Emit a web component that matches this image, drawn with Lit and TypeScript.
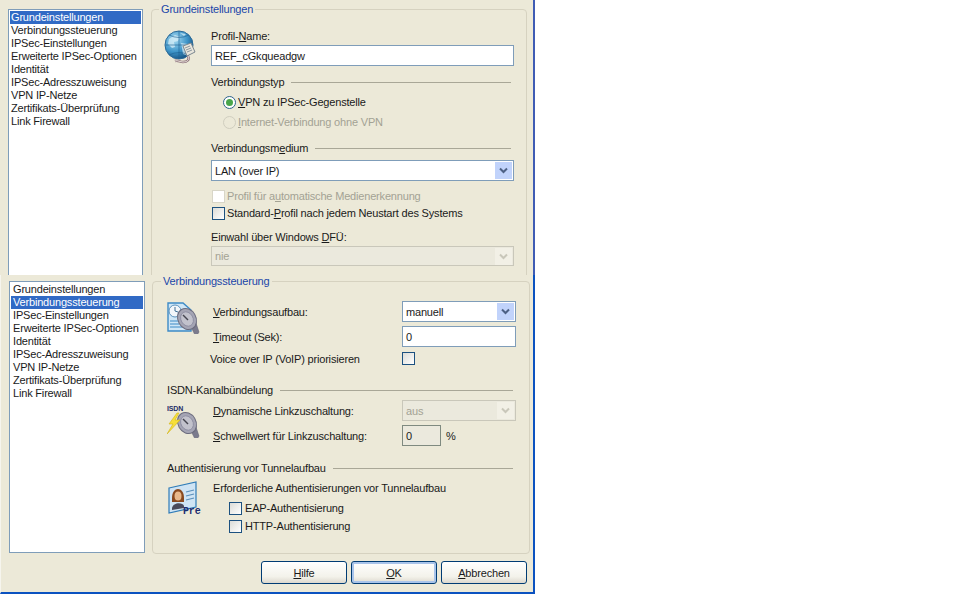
import { LitElement, html, css, svg } from "lit";
import { customElement } from "lit/decorators.js";

const items = ["Grundeinstellungen","Verbindungssteuerung","IPSec-Einstellungen","Erweiterte IPSec-Optionen","Identität","IPSec-Adresszuweisung","VPN IP-Netze","Zertifikats-Überprüfung","Link Firewall"];

const chevron = svg`<svg class="chev" width="9" height="7" viewBox="0 0 9 7"><path d="M1 1.5 L4.5 5 L8 1.5" fill="none" stroke="currentColor" stroke-width="2"/></svg>`;

const globe = html`<svg class="ico" width="34" height="36" viewBox="0 0 34 36">
  <defs><radialGradient id="g1" cx="35%" cy="30%" r="75%"><stop offset="0" stop-color="#a9dcf2"/><stop offset=".6" stop-color="#3d94c8"/><stop offset="1" stop-color="#15507f"/></radialGradient></defs>
  <circle cx="15" cy="15" r="14" fill="url(#g1)" stroke="#2c6a98" stroke-width="1"/>
  <path d="M5 9l6-4 5 2-2 4-4 1 1 5-3 1-4-4zM17 13l7 1 2 5-4 6-3-1-1-6zM16 3l6 1-2 2z" fill="#d7eef7" opacity=".75"/>
  <path d="M2 15h26M15 1v28M5 5q10 5 20 0M5 25q10-5 20 0" fill="none" stroke="#1d5f90" stroke-width=".6"/>
  <path d="M19 16l8-3 4 9-8 4z" fill="#e9e6dc" stroke="#7b8790"/>
  <path d="M21 18l5-2M22 20l5-2M23 22l5-2" stroke="#8c98a0" fill="none"/>
  <path d="M24 26c2 4-1 6-5 6-3 0-5-2-8-1" fill="none" stroke="#8a6f78" stroke-width="2.4"/>
  <path d="M24 26c2 4-1 6-5 6-3 0-5-2-8-1" fill="none" stroke="#ece6e0" stroke-width="1"/>
</svg>`;

const horn = svg`
  <path d="M24 25l5-4 3 9c-1 2-2 3-4 3z" fill="#7b7b8d" stroke="#5f5f70" stroke-width=".5"/>
  <ellipse cx="20" cy="17" rx="9" ry="11" transform="rotate(-30 20 17)" fill="#a5a5b4" stroke="#6c6c7e"/>
  <ellipse cx="20" cy="17" rx="6" ry="7.5" transform="rotate(-30 20 17)" fill="#c2c2cc" stroke="#85859a" stroke-width=".7"/>
  <path d="M16 13l5 5" stroke="#45454f" stroke-width="1.4"/>`;

const clockIcon = html`<svg class="ico" width="33" height="33" viewBox="0 0 33 33">
  <path d="M1 2h15l8 7v21H1z" fill="#cfe6f6" stroke="#3d8ac6" stroke-width="1.4"/>
  <circle cx="8" cy="10" r="6" fill="#f2f6fa" stroke="#5b92bd"/>
  <path d="M8 6v4l3 1" stroke="#3e6f95" fill="none"/>
  <path d="M3 20h9M3 23h9M3 26h13" stroke="#3d8ac6"/>
  <g transform="translate(0 1)">${horn}</g>
</svg>`;

const isdnIcon = html`<svg class="ico isdnico" width="33" height="33" viewBox="0 0 33 33">
  <text x="0" y="6" class="isdn">ISDN</text>
  <g transform="translate(0 1)">${horn}</g>
  <path d="M10 8L2 19h4L0 29l13-14H8l4-7z" fill="#f6e03a" stroke="#d3b414" stroke-width=".6"/>
</svg>`;

const preIcon = html`<svg class="ico" width="33" height="34" viewBox="0 0 33 34">
  <path d="M1 7l27-6v25L1 32z" fill="#cfe4f4" stroke="#2f7cb8" stroke-width="1.2"/>
  <path d="M4 17c0-6 3-9 6-9s6 3 6 9v4H4z" fill="#8a4a1f"/>
  <ellipse cx="10" cy="15" rx="3.5" ry="4.5" fill="#e9b98c"/>
  <path d="M4 27c1-6 11-6 12-2v2l-12 2z" fill="#4a4a5a"/>
  <path d="M18 11l8-2M18 15l8-2M18 19l8-2" stroke="#5a8fba" stroke-width="1.2"/>
  <text x="15" y="32.5" class="pre">Pre</text>
</svg>`;

@customElement("app-root")
export class AppRoot extends LitElement {
  static styles = css`
    :host { display:block; width:953px; height:611px; background:#fff; font:11px/14px "Liberation Sans",Arial,sans-serif; letter-spacing:-0.18px; color:#1a1a1a; overflow:hidden; }
    * { box-sizing:border-box; }
    u { text-decoration:underline; }
    .win { width:535px; background:#ece9d8; border-right:2px solid #3f5cb4; overflow:hidden; }
    .top { height:275px; display:flex; align-items:flex-start; padding:9px 0 0 8px; }
    .bot { height:319px; border-right-color:#0b52c0; border-bottom:2px solid #0b52c0; border-left:1px solid #f6f5ee; padding:6px 0 0 8px; }
    .split { display:flex; align-items:flex-start; }
    .list { background:#fff; border:1px solid #7f9db9; padding:1px; flex:none; }
    .top .list { width:135px; height:290px; margin-right:8px; }
    .bot .list { width:136px; height:272px; margin-right:7px; }
    .li { height:13px; line-height:13px; padding-left:1px; white-space:nowrap; }
    .bot .li { padding-left:2px; }
    .li.sel { background:#316ac5; color:#fff; }
    fieldset { margin:0; padding:0; border:1px solid #d6d2c0; border-radius:4px; flex:none; min-width:0; }
    legend { color:#1a45a8; padding:0 2px; line-height:14px; height:14px; white-space:nowrap; }
    .top fieldset { width:376px; height:330px; margin-top:-7px; }
    .bot fieldset { width:378px; height:280px; margin-top:-7px; }
    .row { display:flex; align-items:center; white-space:nowrap; }
    .ico { flex:none; display:block; }
    .isdn { font:bold 7px "Liberation Sans",sans-serif; fill:#1d2b66; }
    .pre { font:bold 10px "Liberation Mono",monospace; fill:#1c2d70; }
    .field { background:#fff; border:1px solid #7f9db9; display:flex; align-items:center; padding-left:3px; overflow:hidden; height:21px; }
    .drop { flex:none; width:17px; height:17px; margin:1px 1px 1px auto; background:#c1d3fb; color:#4d6185; display:flex; align-items:center; justify-content:center; }
    .field.dis { background:#ebe9dd; border-color:#c9c7ba; color:#a3a294; }
    .field.dis .drop { background:#f2f0e6; color:#c9c7ba; }
    .field.num { background:#ebe9dd; border-color:#7f8a80; }
    .cb { flex:none; width:13px; height:13px; border:1px solid #1c5180; background:linear-gradient(135deg,#dcdcd7,#fff); }
    .cb.dis { border-color:#d8d6c8; background:#fff; }
    .rad { flex:none; width:13px; height:13px; border-radius:50%; border:1px solid #2c628b; background:#fff; display:flex; align-items:center; justify-content:center; }
    .rad i { width:7px; height:7px; border-radius:50%; background:#49a54b; }
    .rad.dis { border-color:#d0cebf; background:transparent; }
    .dim { color:#a3a294; }
    .sec { flex:1; height:1px; background:#a9a797; margin-left:7px; }

    /* upper page */
    .g1 { padding:14px 0 0 12px; }
    .g1 legend { margin-left:-5px; }
    .g1 .head { display:flex; align-items:flex-start; }
    .g1 .col { margin-left:13px; width:304px; margin-top:-1px; }
    .g1 .lab { height:14px; }
    .g1 .in { margin-top:2px; width:303px; }
    .g1 .rest { margin-left:47px; width:303px; }
    .g1 .secline { width:300px; margin-top:9px; }
    .g1 .r1 { margin:6px 0 0 12px; gap:2px; }
    .g1 .r2 { margin:6px 0 0 12px; gap:2px; }
    .g1 .m1 { margin-top:12px; }
    .g1 .sel1 { margin-top:5px; width:303px; }
    .g1 .c1 { margin:8px 0 0 1px; gap:2px; }
    .g1 .c2 { margin:3px 0 0 1px; gap:2px; }
    .g1 .l2 { margin-top:10px; }
    .g1 .sel2 { margin-top:2px; width:303px; height:20px; }

    /* lower page */
    .g2 { padding:13px 0 0 14px; }
    .g2 legend { margin-left:-6px; }
    .g2 .a { display:grid; grid-template-columns:46px 189px 114px; grid-template-rows:21px 21px 15px; row-gap:4px; align-items:center; }
    .g2 .b { display:grid; grid-template-columns:46px 189px 114px; grid-template-rows:21px 21px; row-gap:4px; align-items:center; margin-top:3px; }
    .g2 .ico { grid-row:1 / span 2; align-self:start; }
    .g2 .isdnico { margin-top:5px; }
    .g2 .voice { grid-column:2; margin-left:-3px; }
    .g2 .h { margin-top:17px; width:346px; }
    .g2 .h2 { margin-top:15px; width:346px; }
    .g2 .n { width:39px; }
    .pct { display:flex; align-items:center; gap:5px; }
    .g2 .auth { display:grid; grid-template-columns:46px 1fr; margin-top:6px; }
    .g2 .auth .ico { margin-left:1px; }
    .g2 .auth .c { margin:6px 0 0 16px; gap:3px; }
    .g2 .auth .c + .c { margin-top:4px; }
    .foot { display:flex; justify-content:flex-end; gap:4px; width:518px; margin-top:7px; }
    .btn { width:86px; height:23px; border:1px solid #003c74; border-radius:3px; background:linear-gradient(#fff,#f3f2ea 70%,#dcd8ce); display:flex; align-items:center; justify-content:center; }
    .btn.def { box-shadow:inset 0 0 0 2px #a9c4ea; }
  `;

  private list(sel: number) {
    return html`<div class="list">${items.map((t, i) => html`<div class="li ${i === sel ? "sel" : ""}">${t}</div>`)}</div>`;
  }

  render() {
    return html`
      <div class="win top">
        ${this.list(0)}
        <fieldset class="g1">
          <legend>Grundeinstellungen</legend>
          <div class="head">
            ${globe}
            <div class="col">
              <div class="lab">Profil-<u>N</u>ame:</div>
              <div class="field in">REF_cGkqueadgw</div>
            </div>
          </div>
          <div class="rest">
            <div class="row secline"><span>Verbindungstyp</span><span class="sec"></span></div>
            <div class="row r1"><span class="rad"><i></i></span><span><u>V</u>PN zu IPSec-Gegenstelle</span></div>
            <div class="row r2 dim"><span class="rad dis"></span><span><u>I</u>nternet-Verbindung ohne VPN</span></div>
            <div class="row secline m1"><span>Verbindungsm<u>e</u>dium</span><span class="sec"></span></div>
            <div class="field sel1">LAN (over IP)<span class="drop">${chevron}</span></div>
            <div class="row c1 dim"><span class="cb dis"></span><span>Profil für a<u>u</u>tomatische Medienerkennung</span></div>
            <div class="row c2"><span class="cb"></span><span>Standard-<u>P</u>rofil nach jedem Neustart des Systems</span></div>
            <div class="l2">Einwahl über Windows <u>D</u>FÜ:</div>
            <div class="field dis sel2">nie<span class="drop">${chevron}</span></div>
          </div>
        </fieldset>
      </div>
      <div class="win bot">
        <div class="split">
          ${this.list(1)}
          <fieldset class="g2">
            <legend>Verbindungssteuerung</legend>
            <div class="a">
              ${clockIcon}
              <div><u>V</u>erbindungsaufbau:</div>
              <div class="field">manuell<span class="drop">${chevron}</span></div>
              <div><u>T</u>imeout (Sek):</div>
              <div class="field">0</div>
              <div class="voice">Voice over IP (VoIP) priorisieren</div>
              <span class="cb"></span>
            </div>
            <div class="row h"><span>ISDN-Kanalbündelung</span><span class="sec"></span></div>
            <div class="b">
              ${isdnIcon}
              <div><u>D</u>ynamische Linkzuschaltung:</div>
              <div class="field dis">aus<span class="drop">${chevron}</span></div>
              <div><u>S</u>chwellwert für Linkzuschaltung:</div>
              <div class="pct"><div class="field num n">0</div><span>%</span></div>
            </div>
            <div class="row h2"><span>Authentisierung vor Tunnelaufbau</span><span class="sec"></span></div>
            <div class="auth">
              ${preIcon}
              <div>
                <div>Erforderliche Authentisierungen vor Tunnelaufbau</div>
                <div class="row c"><span class="cb"></span><span>EAP-Authentisierung</span></div>
                <div class="row c"><span class="cb"></span><span>HTTP-Authentisierung</span></div>
              </div>
            </div>
          </fieldset>
        </div>
        <div class="foot">
          <div class="btn"><span><u>H</u>ilfe</span></div>
          <div class="btn def"><span><u>O</u>K</span></div>
          <div class="btn"><span><u>A</u>bbrechen</span></div>
        </div>
      </div>
    `;
  }
}
